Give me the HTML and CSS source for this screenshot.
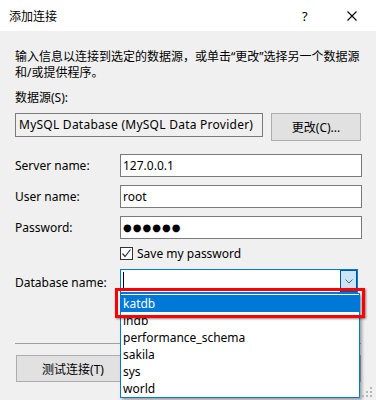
FILE: index.html
```html
<!DOCTYPE html>
<html lang="zh-CN">
<head>
  <meta charset="UTF-8">
  <title>添加连接</title>
  <link rel="stylesheet" href="styles.css">
</head>
<body>
  <div class="window">
    <div class="titlebar">
      <span class="title">添加连接</span>
      <span class="help">?</span>
      <svg class="close" width="10" height="10" viewBox="0 0 10 10">
        <path d="M0.5 0.5 L9.5 9.5 M9.5 0.5 L0.5 9.5" stroke="#000" stroke-width="1.1" fill="none"/>
      </svg>
    </div>

    <div class="content">
      <p class="intro">输入信息以连接到选定的数据源，或单击“更改”选择另一个数据源<br>和/或提供程序。</p>

      <div class="source-label">数据源(S):</div>
      <div class="source-row">
        <div class="source-box">MySQL Database (MySQL Data Provider)</div>
        <button type="button" class="btn change-btn">更改(C)...</button>
      </div>

      <div class="fields">
        <label class="field-label">Server name:</label>
        <div class="textbox">127.0.0.1</div>

        <label class="field-label">User name:</label>
        <div class="textbox">root</div>

        <label class="field-label">Password:</label>
        <div class="textbox password">●●●●●●</div>

        <span></span>
        <div class="check-row">
          <span class="checkbox">
            <svg width="11" height="11" viewBox="0 0 11 11">
              <path d="M1.5 5.5 L4 8.5 L9.5 1.5" stroke="#333" stroke-width="1.2" fill="none"/>
            </svg>
          </span>
          <span>Save my password</span>
        </div>

        <label class="field-label db-label">Database name:</label>
        <div class="combo">
          <span class="caret"></span>
          <span class="combo-btn">
            <svg width="8" height="5" viewBox="0 0 8 5">
              <path d="M0.5 0.5 L4 4 L7.5 0.5" stroke="#606060" stroke-width="1" fill="none"/>
            </svg>
          </span>
        </div>
      </div>

      <div class="separator"></div>

      <div class="button-row">
        <button type="button" class="btn test-btn">测试连接(T)</button>
        <button type="button" class="btn ok-btn">确定</button>
        <button type="button" class="btn cancel-btn">取消</button>
      </div>
    </div>

    <ul class="dropdown">
      <li class="selected">katdb</li>
      <li>lhdb</li>
      <li>performance_schema</li>
      <li>sakila</li>
      <li>sys</li>
      <li>world</li>
    </ul>
    <div class="highlight"></div>

    <svg class="grip" width="12" height="12" viewBox="0 0 12 12">
      <rect x="8" y="1" width="2" height="2" fill="#b8b8b8"/>
      <rect x="4" y="5" width="2" height="2" fill="#b8b8b8"/>
      <rect x="8" y="5" width="2" height="2" fill="#b8b8b8"/>
      <rect x="0" y="9" width="2" height="2" fill="#b8b8b8"/>
      <rect x="4" y="9" width="2" height="2" fill="#b8b8b8"/>
      <rect x="8" y="9" width="2" height="2" fill="#b8b8b8"/>
    </svg>
  </div>
</body>
</html>
```

FILE: styles.css
```css
* {
  margin: 0;
  padding: 0;
  box-sizing: border-box;
}

body {
  width: 376px;
  height: 400px;
  overflow: hidden;
  background: #f0f0f0;
  font-family: "Noto Sans", "Noto Sans CJK SC", sans-serif;
  font-size: 12px;
  color: #000;
}

.window {
  position: relative;
  width: 376px;
  height: 400px;
}

.titlebar {
  display: flex;
  align-items: center;
  height: 31px;
  background: #fff;
  padding-left: 9px;
}

.title {
  flex: 1;
  font-size: 12px;
}

.help {
  width: 8px;
  margin-right: 37px;
  font-size: 13px;
}

.close {
  margin-right: 19px;
}

.content {
  padding: 0 15px;
}

.intro {
  margin-top: 18px;
  line-height: 16px;
}

.source-label {
  margin-top: 9px;
  line-height: 16px;
}

.source-row {
  display: flex;
  align-items: flex-start;
  gap: 8px;
  margin-top: 7px;
}

.source-box {
  width: 248px;
  height: 24px;
  line-height: 22px;
  padding-left: 3px;
  border: 1px solid #7a7a7a;
  background: #f0f0f0;
  letter-spacing: 0.25px;
  white-space: nowrap;
  overflow: hidden;
}

.btn {
  font-family: inherit;
  font-size: 12px;
  color: #000;
  background: #e1e1e1;
  border: 1px solid #adadad;
}

.change-btn {
  width: 90px;
  height: 28px;
}

.fields {
  display: grid;
  grid-template-columns: 105px 242px;
  row-gap: 8px;
  align-items: center;
  margin-top: 13px;
}

.textbox {
  height: 23px;
  line-height: 21px;
  padding-left: 2px;
  border: 1px solid #7a7a7a;
  background: #fff;
}

.password {
  font-family: "DejaVu Sans", sans-serif;
  font-size: 10px;
  letter-spacing: 1px;
}

.check-row {
  display: flex;
  align-items: center;
  gap: 4px;
  height: 13px;
}

.checkbox {
  display: flex;
  align-items: center;
  justify-content: center;
  width: 13px;
  height: 13px;
  border: 1px solid #333;
  background: #fff;
}

.db-label {
  margin-top: 3px;
}

.combo {
  position: relative;
  display: flex;
  justify-content: space-between;
  width: 238px;
  height: 24px;
  margin-top: 1px;
  padding: 2px 0 0 2px;
  border: 1px solid #0078d7;
  background: #fff;
}

.caret {
  width: 1px;
  height: 18px;
  background: #000;
}

.combo-btn {
  display: flex;
  align-items: center;
  justify-content: center;
  width: 17px;
  height: 22px;
  margin-top: -2px;
  background: #cce4f7;
  border: 1px solid #005499;
}

.separator {
  height: 1px;
  margin-top: 50px;
  background: #a0a0a0;
}

.button-row {
  display: flex;
  margin-top: 11px;
  margin-left: 1px;
}

.test-btn {
  width: 114px;
  height: 27px;
}

.ok-btn {
  width: 90px;
  height: 27px;
  margin-left: 45px;
}

.cancel-btn {
  width: 90px;
  height: 27px;
  margin-left: 6px;
}

.dropdown {
  position: absolute;
  left: 120px;
  top: 293px;
  width: 240px;
  height: 105px;
  padding-top: 1px;
  list-style: none;
  background: #fff;
  border: 1px solid #0078d7;
  box-shadow: 2px 2px 3px rgba(0, 0, 0, 0.35);
}

.dropdown li {
  height: 17px;
  line-height: 17px;
  padding-left: 2px;
}

.dropdown li.selected {
  background: #0078d7;
  color: #fff;
}

.highlight {
  position: absolute;
  left: 115px;
  top: 288px;
  width: 250px;
  height: 30px;
  border: 3px solid #f00;
  box-shadow: 1px 1px 2px rgba(0, 0, 0, 0.45);
}

.grip {
  position: absolute;
  right: 2px;
  bottom: 2px;
}
```
